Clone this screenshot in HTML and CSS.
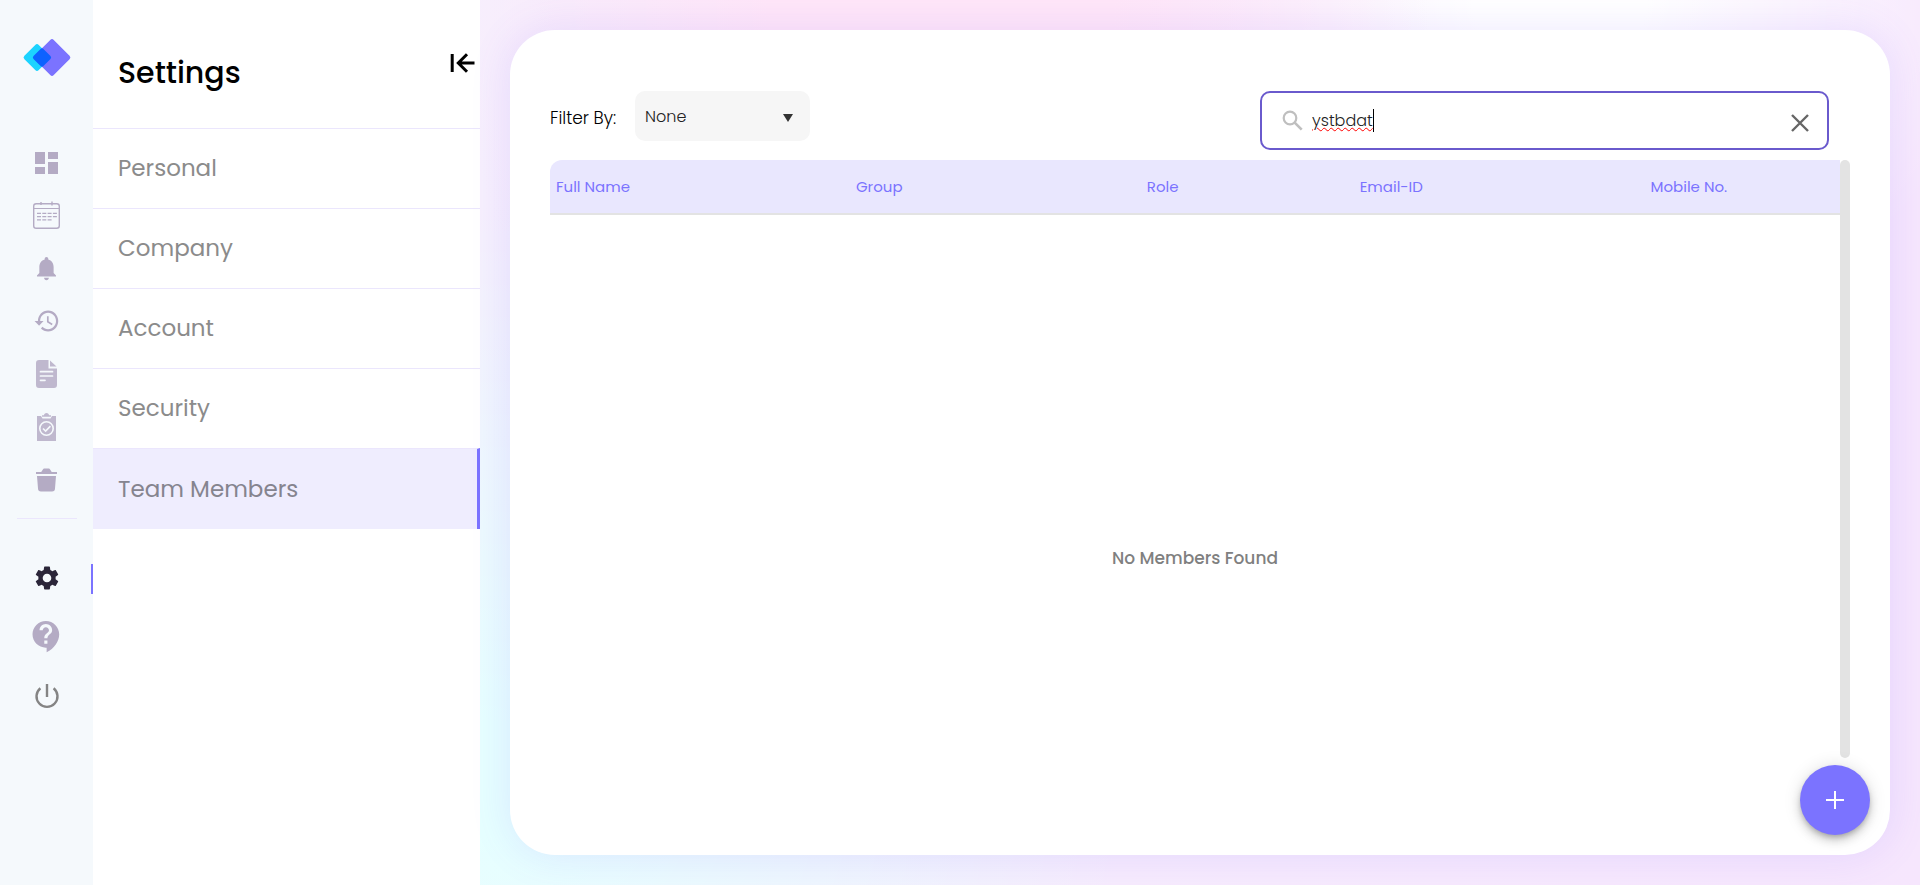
FILE: index.html
```html
<!DOCTYPE html>
<html lang="en">
<head>
<meta charset="utf-8">
<meta name="viewport" content="width=device-width, initial-scale=1">
<title>Settings</title>
<link rel="stylesheet" href="styles.css">
</head>
<body>
<nav class="rail" aria-label="Main">
  <a class="rail-logo" href="#" aria-label="Home">
    <svg width="48" height="37" viewBox="0 0 48 37">
      <rect x="3.85" y="8.35" width="20.3" height="20.3" rx="2.5" fill="#1cd3ff" transform="rotate(45 14 18.5)"/>
      <rect x="15.35" y="4.85" width="27.3" height="27.3" rx="2.5" fill="#7b73ff" transform="rotate(45 29 18.5)"/>
      <rect x="12" y="11.5" width="14" height="14" rx="2" fill="#0d62ff" transform="rotate(45 19 18.5)"/>
    </svg>
  </a>
  <div class="rail-group">
    <a class="rail-item" href="#" aria-label="Dashboard"><svg class="icon" viewBox="0 0 31 31" fill="currentColor"><path d="M4 4h10v12H4zM4 19h10v7H4zM17 4h10v7H17zM17 14h10v12H17z"/></svg></a>
    <a class="rail-item" href="#" aria-label="Calendar"><svg class="icon" viewBox="0 0 31 31" fill="none" stroke="currentColor"><rect x="2.7" y="2.7" width="25.6" height="24.6" rx="2.5" stroke-width="1.4"/><path d="M3 7.5h25" stroke-width="1"/><path d="M10 1v3M21 .5v4" stroke-width="1.4"/><path d="M6 12.4h20M6 15.6h20M6 18.9h15" stroke-width="1.2" stroke-dasharray="4 1.3"/></svg></a>
    <a class="rail-item" href="#" aria-label="Notifications"><svg class="icon" viewBox="0 0 31 31" fill="currentColor"><path transform="translate(1.2 0) scale(1.19)" d="M12 22c1.1 0 2-.9 2-2h-4c0 1.1.89 2 2 2zm6-6v-5c0-3.07-1.64-5.64-4.5-6.32V4c0-.83-.67-1.5-1.5-1.5s-1.5.67-1.5 1.5v.68C7.63 5.36 6 7.92 6 11v5l-2 2v1h16v-1l-2-2z"/></svg></a>
    <a class="rail-item" href="#" aria-label="History"><svg class="icon" viewBox="0 0 31 31" fill="currentColor"><path transform="translate(2.4 0) scale(1.13 1.17)" d="M13 3c-4.97 0-9 4.03-9 9H1l3.89 3.89.07.14L9 12H6c0-3.87 3.13-7 7-7s7 3.13 7 7-3.13 7-7 7c-1.93 0-3.68-.79-4.94-2.06l-1.42 1.42C8.27 19.99 10.51 21 13 21c4.97 0 9-4.03 9-9s-4.03-9-9-9zm-1 5v5l4.28 2.54.72-1.21-3.5-2.08V8H12z"/></svg></a>
    <a class="rail-item rail-item-soft" href="#" aria-label="Documents"><svg class="icon" viewBox="0 0 31 31" fill="currentColor"><path d="M8 0h9.5v8.5H26V25a3 3 0 0 1-3 3H8a3 3 0 0 1-3-3V3a3 3 0 0 1 3-3z"/><path d="M19 .5 25.500 6.500H19z"/><path d="M9.500 11.700h12M9.500 16h12M9.500 20.300h4.500" stroke="#f5f9fc" stroke-width="1.700" stroke-linecap="round"/></svg></a>
    <a class="rail-item rail-item-soft" href="#" aria-label="Tasks"><svg class="icon" viewBox="0 0 31 31" fill="currentColor"><path d="M6 3h4l1.500 2.500h8L21 3h4v25H6z"/><path d="M11 3.800V2.300h1.800C13.500.8 14.300 0 15.500 0s2 .8 2.700 2.300H20v1.500z"/><g fill="none" stroke="#f5f9fc" stroke-width="1.600"><circle cx="15.500" cy="15.500" r="6.700"/><path d="m12 15.500 2.600 2.600 4.800-5"/></g></svg></a>
    <a class="rail-item" href="#" aria-label="Trash"><svg class="icon" viewBox="0 0 31 31" fill="currentColor"><path d="M5 6h5c1.500-1 1.500-3.600 3.500-3.600h4C19.500 2.400 19.500 5 21 6h5v2H5z"/><path d="M6 10h19l-1 12.500a3 3 0 0 1-3 3H10a3 3 0 0 1-3-3z"/></svg></a>
  </div>
  <hr class="rail-divider">
  <div class="rail-group rail-group-foot">
    <a class="rail-item rail-item-active" href="#" aria-label="Settings" aria-current="page"><svg class="icon" viewBox="0 0 31 31" fill="currentColor"><path transform="translate(1.6 .6) scale(1.2)" d="M19.140 12.940c.04-.3.06-.61.06-.94 0-.32-.02-.64-.07-.94l2.030-1.580c.18-.14.23-.41.12-.61l-1.920-3.320c-.12-.22-.37-.29-.59-.22l-2.390.96c-.5-.38-1.030-.7-1.620-.94l-.36-2.540c-.04-.24-.24-.41-.48-.41h-3.840c-.24 0-.43.17-.47.41l-.36 2.540c-.59.24-1.130.57-1.620.94l-2.390-.96c-.22-.08-.47 0-.59.22L2.740 8.870c-.12.21-.08.47.12.61l2.030 1.580c-.05.3-.09.63-.09.94s.02.64.07.94l-2.030 1.580c-.18.14-.23.41-.12.61l1.920 3.320c.12.22.37.29.59.22l2.390-.96c.5.38 1.030.7 1.620.94l.36 2.540c.05.24.24.41.48.41h3.840c.24 0 .44-.17.47-.41l.36-2.540c.59-.24 1.130-.56 1.620-.94l2.390.96c.22.08.47 0 .59-.22l1.920-3.320c.12-.22.07-.47-.12-.61l-2.010-1.580zM12 15.600c-1.980 0-3.600-1.620-3.600-3.600s1.620-3.600 3.600-3.600 3.600 1.620 3.600 3.600-1.620 3.600-3.600 3.600z"/></svg></a>
    <a class="rail-item" href="#" aria-label="Help"><svg class="icon" viewBox="0 0 31 31" fill="currentColor"><path transform="translate(-3.2 -4.2) scale(1.57)" d="M11.500 2C6.810 2 3 5.810 3 10.500S6.810 19 11.500 19h.5v3c4.860-2.340 8-7 8-11.500C20 5.810 16.190 2 11.500 2zm1 14.500h-2v-2h2v2zm0-3.500h-2c0-3.250 3-3 3-5 0-1.100-.9-2-2-2s-2 .9-2 2h-2c0-2.210 1.790-4 4-4s4 1.790 4 4c0 2.500-3 2.750-3 5z"/></svg></a>
    <a class="rail-item rail-item-gray" href="#" aria-label="Log out"><svg class="icon" viewBox="0 0 31 31" fill="none" stroke="currentColor" stroke-width="2.400"><path d="M16 3v13M9.400 7.200a10.500 10.500 0 1 0 13.200 0"/></svg></a>
  </div>
</nav>

<aside class="panel">
  <header class="panel-head">
    <h1 class="panel-title">Settings</h1>
    <button class="collapse" type="button" aria-label="Collapse panel">
      <svg width="25" height="20" viewBox="0 0 25 20" fill="none" stroke="#000" stroke-width="3"><path d="M2.200 1v18M24.500 10H8M17 1.300 8.300 10l8.700 8.700"/></svg>
    </button>
  </header>
  <nav class="panel-nav" aria-label="Settings sections">
    <a class="panel-link" href="#">Personal</a>
    <a class="panel-link" href="#">Company</a>
    <a class="panel-link" href="#">Account</a>
    <a class="panel-link" href="#">Security</a>
    <a class="panel-link panel-link-active" href="#" aria-current="page">Team Members</a>
  </nav>
</aside>

<main class="main">
  <section class="card">
    <div class="toolbar">
      <label class="filter-label" for="filter">Filter By:</label>
      <div class="filter-box">
        <select class="filter" id="filter"><option>None</option></select>
      </div>
      <div class="search">
        <svg class="search-icon" viewBox="0 0 21 21" fill="none" stroke="#bfbfbf" stroke-width="2.200"><circle cx="8" cy="8" r="6.300"/><path d="m12.700 12.700 7 7" stroke-width="2.600"/></svg>
        <div class="search-field">
          <input class="search-input" type="text" value="ystbdat" aria-label="Search members">
          <span class="caret"></span>
        </div>
        <button class="clear" type="button" aria-label="Clear search">
          <svg width="18" height="18" viewBox="0 0 18 18" fill="none" stroke="#666" stroke-width="2.400"><path d="m1 1 16 16M17 1 1 17"/></svg>
        </button>
      </div>
    </div>
    <div class="members">
      <div class="members-body">
        <table class="table">
          <thead>
            <tr><th class="col-name">Full Name</th><th class="col-group">Group</th><th class="col-role">Role</th><th class="col-email">Email-ID</th><th class="col-mobile">Mobile No.</th></tr>
          </thead>
        </table>
        <p class="empty">No Members Found</p>
      </div>
      <div class="scrollbar"></div>
    </div>
    <button class="fab" type="button" aria-label="Add member">
      <svg width="18" height="18" viewBox="0 0 18 18" stroke="#fff" stroke-width="2"><path d="M9 0v18M0 9h18"/></svg>
    </button>
  </section>
</main>
</body>
</html>
```
FILE: styles.css
```css
* { box-sizing: border-box; }

body {
  margin: 0;
  min-height: 100vh;
  display: flex;
  font-family: Poppins, Inter, sans-serif;
  font-size: 16px;
  color: #000;
}

a { color: inherit; text-decoration: none; }
button { border: 0; padding: 0; background: none; cursor: pointer; }
svg { display: block; overflow: visible; }

/* Icon rail */
.rail {
  width: 93px;
  flex: none;
  background: #f5f9fc;
  color: #b4abc4;
}
.rail-logo {
  display: flex;
  justify-content: center;
  padding: 39px 0 61px;
}
.rail-item {
  position: relative;
  display: flex;
  align-items: center;
  justify-content: center;
  height: 53px;
}
.rail-group-foot .rail-item { height: 59px; }
.rail-item-soft { color: #bfb8ce; }
.rail-item-gray { color: #848484; }
.rail-item-active { color: #2b2639; }
.rail-item-active::after {
  content: "";
  position: absolute;
  right: 0;
  width: 2px;
  height: 30px;
  background: #7b73ff;
}
.icon { width: 31px; height: 31px; }
.rail-divider {
  width: 60px;
  height: 1px;
  margin: 10px auto 30px;
  border: 0;
  background: #ebe6fd;
}

/* Settings panel */
.panel {
  width: 387px;
  flex: none;
  background: #fff;
}
.panel-head {
  display: flex;
  justify-content: space-between;
  align-items: center;
  height: 128px;
  padding: 18px 5px 0 25px;
}
.panel-title {
  margin: 0;
  font-size: 30px;
  line-height: 44px;
  font-weight: 500;
}
.collapse { margin-bottom: 20px; }
.panel-link {
  display: flex;
  align-items: center;
  height: 80px;
  padding: 0 0 1px 25px;
  border-top: 1px solid #ebe6fd;
  font-size: 23px;
  color: #8b8b8b;
}
.panel-link-active {
  height: 81px;
  background: #efedfe;
  border-right: 3px solid #7b73ff;
  color: #85848f;
}

/* Main area */
.main {
  flex: 1;
  min-width: 0;
  display: flex;
  padding: 30px;
  background:
    radial-gradient(ellipse 45% 65% at 0 88%, #e6ffff 0, #e6ffff 10%, rgba(230, 255, 255, 0) 100%),
    radial-gradient(ellipse 34% 60% at 32% 0, #ffe6f8 0, #ffe6f8 35%, rgba(255, 230, 248, 0) 100%),
    radial-gradient(ellipse 30% 40% at 75% 0, #fff 0, #fff 20%, rgba(255, 255, 255, 0) 100%),
    linear-gradient(90deg, #f6effd, #f6e6fd);
}
.card {
  position: relative;
  flex: 1;
  min-width: 0;
  display: flex;
  flex-direction: column;
  padding: 61px 40px 97px;
  border-radius: 45px;
  background: #fff;
  box-shadow: 0 0 40px rgba(123, 95, 255, 0.14);
}
.toolbar {
  display: flex;
  align-items: flex-start;
  margin-bottom: 10px;
  padding-right: 21px;
  font-weight: 300;
}
.filter-label {
  width: 85px;
  line-height: 54px;
  font-size: 17px;
}
.filter-box { position: relative; }
.filter-box::after {
  content: "";
  position: absolute;
  right: 17px;
  top: 23px;
  border: 5px solid transparent;
  border-top: 8px solid #333;
  border-bottom: 0;
}
.filter {
  appearance: none;
  width: 175px;
  height: 50px;
  padding: 0 10px;
  border: 0;
  border-radius: 10px;
  background: #f6f6f6;
  color: #222;
  font: inherit;
}
.search {
  display: flex;
  align-items: center;
  width: 569px;
  height: 59px;
  margin-left: auto;
  padding: 0 18px 0 20px;
  border: 2px solid #6a5acd;
  border-radius: 10px;
}
.search-icon { width: 21px; height: 21px; }
.search-field {
  position: relative;
  flex: 1;
  margin-left: 9px;
}
.search-input {
  display: block;
  width: 100%;
  height: 24px;
  padding: 0;
  border: 0;
  outline: 0;
  background: none;
  color: #222;
  font: inherit;
  text-decoration: underline wavy #f00 1px;
}
.caret {
  position: absolute;
  left: 61px;
  top: 0;
  width: 1px;
  height: 23px;
  background: #000;
}
.clear { padding-top: 5px; }

.members { flex: 1; display: flex; }
.members-body { flex: 1; }
.table {
  width: 100%;
  table-layout: fixed;
  border-collapse: separate;
  border-spacing: 0;
}
.table th {
  height: 55px;
  padding: 0 0 0 6px;
  border-bottom: 2px solid #e3e3e3;
  background: #e9e7fe;
  color: #7b73ff;
  font-size: 15px;
  font-weight: 400;
  text-align: left;
}
.table th:first-child { border-top-left-radius: 12px; }
.col-name { width: 23.25%; }
.col-group { width: 22.55%; }
.col-role { width: 16.5%; }
.col-email { width: 22.55%; }
.empty {
  margin: 0;
  padding-top: 331px;
  line-height: 24px;
  text-align: center;
  font-weight: 500;
  font-size: 17px;
  color: #808080;
}
.scrollbar {
  width: 10px;
  border-radius: 5px;
  background: #e3e3e3;
}
.fab {
  position: absolute;
  right: 20px;
  bottom: 20px;
  display: grid;
  place-items: center;
  width: 70px;
  height: 70px;
  border-radius: 50%;
  background: #7b73ff;
  box-shadow: 0 3px 5px -1px rgba(0, 0, 0, 0.2), 0 6px 10px rgba(0, 0, 0, 0.14), 0 1px 18px rgba(0, 0, 0, 0.12);
}
```
